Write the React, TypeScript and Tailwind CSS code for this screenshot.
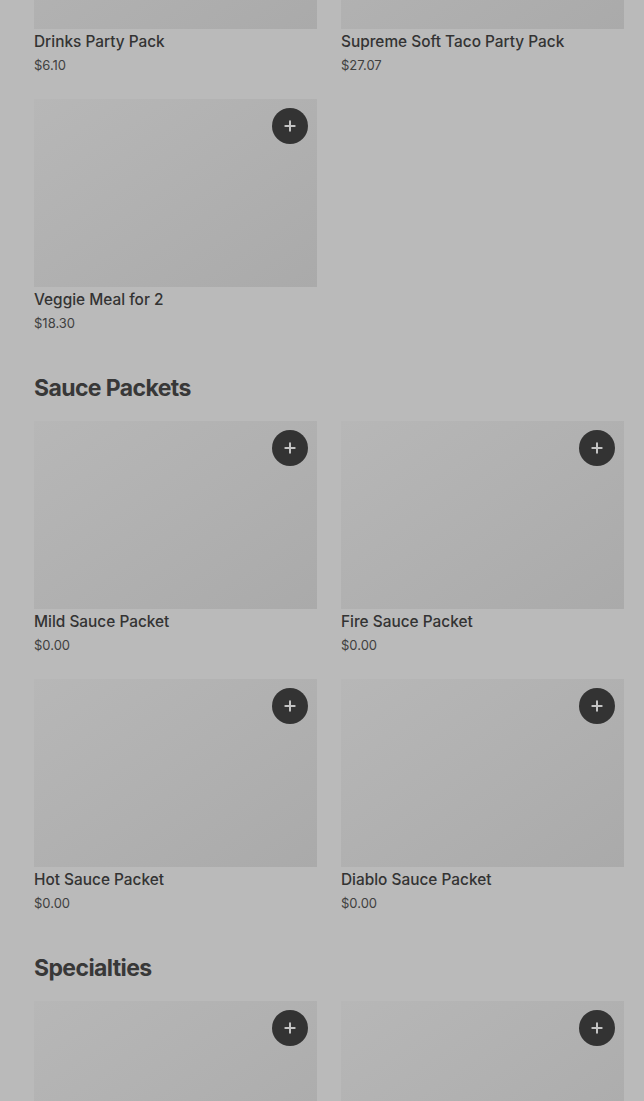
import { Plus } from 'lucide-react'

type Item = { name: string; price: string }

const topItems: Item[] = [
  { name: 'Drinks Party Pack', price: '$6.10' },
  { name: 'Supreme Soft Taco Party Pack', price: '$27.07' },
  { name: 'Veggie Meal for 2', price: '$18.30' },
]

const sections: { title: string; items: Item[]; belowFold?: boolean }[] = [
  {
    title: 'Sauce Packets',
    items: [
      { name: 'Mild Sauce Packet', price: '$0.00' },
      { name: 'Fire Sauce Packet', price: '$0.00' },
      { name: 'Hot Sauce Packet', price: '$0.00' },
      { name: 'Diablo Sauce Packet', price: '$0.00' },
    ],
  },
  {
    title: 'Specialties',
    // only the image tops are in view
    belowFold: true,
    items: [
      { name: '', price: '' },
      { name: '', price: '' },
    ],
  },
]

function MenuCard({ item, showAdd = true }: { item: Item; showAdd?: boolean }) {
  return (
    <div className="flex flex-col">
      <div className="relative h-[188px] bg-gradient-to-br from-[#b7b7b7] to-[#aaaaaa]">
        {showAdd && (
          <button className="absolute top-[9px] right-[9px] w-9 h-9 rounded-full bg-[#333333] flex items-center justify-center">
            <Plus className="w-4 h-4 text-[#c4c4c4]" strokeWidth={3} />
          </button>
        )}
      </div>
      {item.name && (
        <>
          <div className="pt-[3px] text-[15.4px] leading-5 font-medium text-[#333333]">{item.name}</div>
          <div className="pt-[3px] text-[13px] leading-5 text-[#404040]">{item.price}</div>
        </>
      )}
    </div>
  )
}

export default function App() {
  return (
    <div
      className="h-[1101px] overflow-hidden bg-[#bababa]"
      style={{ fontFamily: 'Inter, "Noto Sans", sans-serif' }}
    >
      {/* page is scrolled partway down the menu */}
      <div className="-mt-[159px] pl-[34px] pr-[20px]">
        <div className="grid grid-cols-2 gap-x-6 gap-y-6">
          {topItems.map((item, i) => (
            <MenuCard key={item.name} item={item} showAdd={i === 2} />
          ))}
        </div>

        {sections.map((section) => (
          <div key={section.title} className="pt-[39px]">
            <h2 className="text-[23px] leading-8 font-bold tracking-[-0.6px] text-[#383838]">
              {section.title}
            </h2>
            <div className="mt-[17px] grid grid-cols-2 gap-x-6 gap-y-6">
              {section.items.map((item, i) => (
                <MenuCard key={i} item={item} />
              ))}
            </div>
          </div>
        ))}
      </div>
    </div>
  )
}
